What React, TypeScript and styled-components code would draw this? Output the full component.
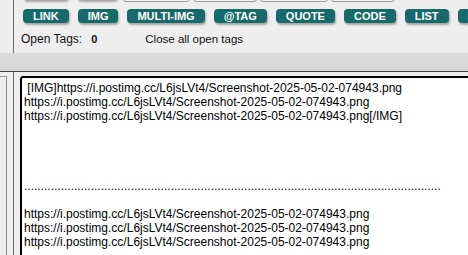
import styled, { createGlobalStyle } from "styled-components";

const GlobalStyle = createGlobalStyle`
  html, body {
    margin: 0;
    padding: 0;
    background: #eeeeee;
    overflow: hidden;
    font-family: "Liberation Sans", Arial, sans-serif;
  }
`;

const TopPanel = styled.div`
  margin-left: 13px;
  height: 53px;
  border-left: 1px solid #6b6b6b;
  overflow: hidden;
  display: flex;
  flex-direction: column;
`;

// previous toolbar row, scrolled mostly out of view
const ClippedRow = styled.div`
  display: flex;
  gap: 3px;
  margin-top: -14px;
  padding-left: 9px;
  height: 16px;
  flex-shrink: 0;
`;

const OptionBox = styled.div<{ $w: number }>`
  width: ${(p) => p.$w}px;
  height: 14px;
  border: 1px solid #9a9a9a;
  border-radius: 3px;
  background: #f2f2f2;
`;

const StubButton = styled.div<{ $w: number; $gap?: number }>`
  width: ${(p) => p.$w}px;
  margin-right: ${(p) => p.$gap ?? 0}px;
  height: 14px;
  border-radius: 4px;
  background: #166a6a;
  box-shadow: 1px 2px 2px rgba(0, 0, 0, 0.3);
`;

const ButtonRow = styled.div`
  display: flex;
  gap: 9px;
  padding-left: 9px;
  margin-top: 7px;
  flex-shrink: 0;
  white-space: nowrap;
`;

const TagButton = styled.button`
  flex-shrink: 0;
  height: 14px;
  padding: 0 10px;
  border: none;
  border-radius: 4px;
  background: #166a6a;
  color: #ffffff;
  font-family: "Liberation Sans", Arial, sans-serif;
  font-weight: bold;
  font-size: 11px;
  line-height: 14px;
  box-shadow: 1px 2px 2px rgba(0, 0, 0, 0.3);
  cursor: pointer;
`;

const InfoRow = styled.div`
  display: flex;
  align-items: baseline;
  padding-left: 7px;
  margin-top: 9px;
  color: #111;
  white-space: nowrap;
`;

const InfoLabel = styled.span`
  font-size: 12px;
`;

const TagCount = styled.span`
  margin-left: 9px;
  font-size: 11px;
  font-weight: bold;
`;

const CloseLink = styled.span`
  margin-left: 48px;
  font-size: 11.5px;
`;

const Band = styled.div`
  height: 18px;
  background: #d9d9d9;
  border-bottom: 1px solid #454545;
`;

const Workspace = styled.div`
  display: flex;
  height: 200px;
`;

const Gutter = styled.div`
  width: 13px;
  flex-shrink: 0;
  padding-top: 4px;
`;

const GutterBox = styled.div`
  width: 6px;
  height: 100%;
  border-top: 1px solid #a0a0a0;
  border-right: 1px solid #8a8a8a;
`;

const EditorColumn = styled.div`
  flex: 1;
  border-left: 1px solid #6b6b6b;
  padding: 4px 0 0 6px;
`;

const Editor = styled.textarea`
  display: block;
  width: 620px;
  height: 260px;
  margin: 0;
  padding: 3px 2px;
  border: 2px solid #000;
  border-radius: 3px;
  background: #fff;
  color: #000;
  font-family: "Liberation Sans", Arial, sans-serif;
  font-size: 12px;
  line-height: normal;
  resize: none;
  overflow: hidden;
  white-space: pre;
  outline: none;
`;

const URL = "https://i.postimg.cc/L6jsLVt4/Screenshot-2025-05-02-074943.png";

const text =
  ` [IMG]${URL}\n${URL}\n${URL}[/IMG]\n\n\n\n\n` +
  ".".repeat(125) +
  `\n\n${URL}\n${URL}\n${URL}`;

const buttons = ["LINK", "IMG", "MULTI-IMG", "@TAG", "QUOTE", "CODE", "LIST", "HIDE"];

export default function App() {
  return (
    <>
      <GlobalStyle />
      <TopPanel>
        <ClippedRow>
          <StubButton $w={45} $gap={6} />
          <StubButton $w={40} $gap={3} />
          <OptionBox $w={65} />
          <OptionBox $w={62} />
          <OptionBox $w={66} />
          <OptionBox $w={62} />
        </ClippedRow>
        <ButtonRow>
          {buttons.map((b) => (
            <TagButton key={b}>{b}</TagButton>
          ))}
        </ButtonRow>
        <InfoRow>
          <InfoLabel>Open Tags:</InfoLabel>
          <TagCount>0</TagCount>
          <CloseLink>Close all open tags</CloseLink>
        </InfoRow>
      </TopPanel>
      <Band />
      <Workspace>
        <Gutter>
          <GutterBox />
        </Gutter>
        <EditorColumn>
          <Editor defaultValue={text} spellCheck={false} />
        </EditorColumn>
      </Workspace>
    </>
  );
}
